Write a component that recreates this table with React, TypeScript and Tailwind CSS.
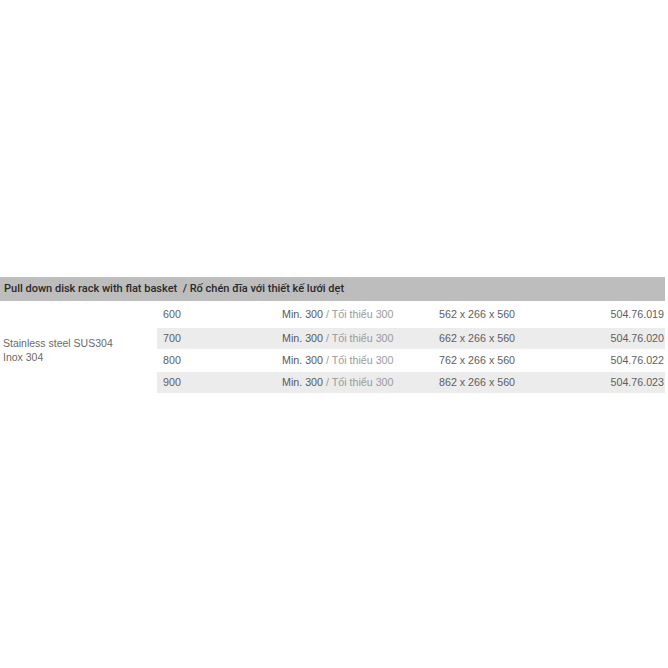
export default function App() {
  const rows = [
    { size: "600", dim: "562 x 266 x 560", code: "504.76.019", h: "h-[27px]", bg: "" },
    { size: "700", dim: "662 x 266 x 560", code: "504.76.020", h: "h-[21px]", bg: "bg-[#ececec]" },
    { size: "800", dim: "762 x 266 x 560", code: "504.76.022", h: "h-[23px]", bg: "" },
    { size: "900", dim: "862 x 266 x 560", code: "504.76.023", h: "h-[21px]", bg: "bg-[#ececec]" },
  ];
  return (
    <div
      className="w-[668px] h-[668px] bg-white pt-[277px] text-[10.5px]"
      style={{ fontFamily: '"Liberation Sans", Arial, sans-serif' }}
    >
      <div
        className="w-[665px] h-[24px] bg-[#bdbdbd] flex items-center pl-[4px] font-medium text-[#2a2a2a] text-[11px] whitespace-pre"
        style={{ fontFamily: 'Roboto, "Liberation Sans", sans-serif' }}
      >
        {"Pull down disk rack with flat basket  / Rố chén đĩa với thiết kế lưới dẹt"}
      </div>
      <div className="flex w-[665px]">
        <div className="w-[157px] flex flex-col justify-center pl-[3px] text-[#6a6a6a] leading-[14px] pt-[6px]">
          <div>Stainless steel SUS304</div>
          <div>Inox 304</div>
        </div>
        <div className="flex-1 flex flex-col text-[10.7px]">
          {rows.map((r) => (
            <div key={r.size} className={`flex items-center ${r.h} ${r.bg} text-[#606060]`}>
              <div className="w-[125px] pl-[6px]">{r.size}</div>
              <div className="w-[157px]">
                <span className="text-[#585858]">Min. 300</span>
                <span className="text-[#9a9a9a]"> / Tối thiểu 300</span>
              </div>
              <div className="flex-1">{r.dim}</div>
              <div className="pr-[1px]">{r.code}</div>
            </div>
          ))}
        </div>
      </div>
    </div>
  );
}
